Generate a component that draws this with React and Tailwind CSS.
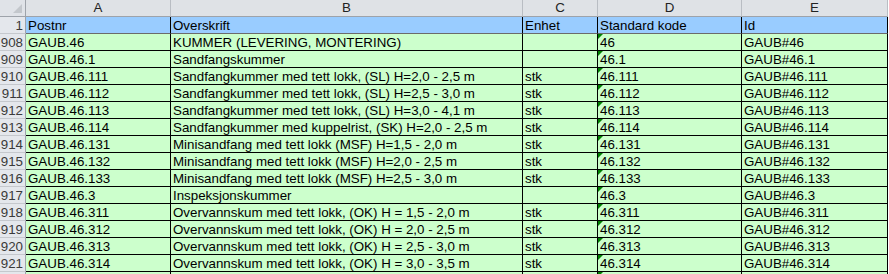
const cols = [
  { key: "A", w: "w-[145px]" },
  { key: "B", w: "w-[352px]" },
  { key: "C", w: "w-[75px]" },
  { key: "D", w: "w-[144px]" },
  { key: "E", w: "w-[146px]" },
];

const header = ["Postnr", "Overskrift", "Enhet", "Standard kode", "Id"];

const rows = [
  [908, "GAUB.46", "KUMMER (LEVERING, MONTERING)", "", "46"],
  [909, "GAUB.46.1", "Sandfangskummer", "", "46.1"],
  [910, "GAUB.46.111", "Sandfangkummer med tett lokk, (SL) H=2,0 - 2,5 m", "stk", "46.111"],
  [911, "GAUB.46.112", "Sandfangkummer med tett lokk, (SL) H=2,5 - 3,0 m", "stk", "46.112"],
  [912, "GAUB.46.113", "Sandfangkummer med tett lokk, (SL) H=3,0 - 4,1 m", "stk", "46.113"],
  [913, "GAUB.46.114", "Sandfangkummer med kuppelrist, (SK) H=2,0 - 2,5 m", "stk", "46.114"],
  [914, "GAUB.46.131", "Minisandfang med tett lokk (MSF) H=1,5 - 2,0 m", "stk", "46.131"],
  [915, "GAUB.46.132", "Minisandfang med tett lokk (MSF) H=2,0 - 2,5 m", "stk", "46.132"],
  [916, "GAUB.46.133", "Minisandfang med tett lokk (MSF) H=2,5 - 3,0 m", "stk", "46.133"],
  [917, "GAUB.46.3", "Inspeksjonskummer", "", "46.3"],
  [918, "GAUB.46.311", "Overvannskum med tett lokk, (OK) H = 1,5 - 2,0 m", "stk", "46.311"],
  [919, "GAUB.46.312", "Overvannskum med tett lokk, (OK) H = 2,0 - 2,5 m", "stk", "46.312"],
  [920, "GAUB.46.313", "Overvannskum med tett lokk, (OK) H = 2,5 - 3,0 m", "stk", "46.313"],
  [921, "GAUB.46.314", "Overvannskum med tett lokk, (OK) H = 3,0 - 3,5 m", "stk", "46.314"],
];

function RowHead({ children }) {
  return (
    <div className="w-[26px] h-full shrink-0 bg-[#e4e7ec] border-r border-b border-r-[#9ea3aa] border-b-[#c5c8cd] text-right pr-[2px] pt-[2px] leading-[14px] text-[#3a3a3a] overflow-hidden">
      {children}
    </div>
  );
}

function Cell({ w, children, flag }) {
  return (
    <div className={`${w} relative h-full shrink-0 bg-[#ccffcc] border-r border-b border-black pl-[2px] pt-[2px] leading-[14px] whitespace-nowrap overflow-hidden`}>
      {flag && (
        <span className="absolute left-0 top-0 w-0 h-0 border-t-[5px] border-r-[5px] border-t-[#008000] border-r-transparent" />
      )}
      {children}
    </div>
  );
}

export default function App() {
  return (
    <div className="w-[889px] h-[274px] overflow-hidden bg-white text-[13.33px] text-black" style={{ fontFamily: '"Liberation Sans", Arial, sans-serif' }}>
      {/* column letters */}
      <div className="flex h-[17px]">
        <div className="relative w-[26px] h-full shrink-0 bg-[#e0e3e8] border-r border-b border-[#9ea3aa]">
          <span className="absolute right-[3px] bottom-[3px] w-0 h-0 border-b-[9px] border-l-[9px] border-b-[#c3c7cc] border-l-transparent" />
        </div>
        {cols.map((c) => (
          <div key={c.key} className={`${c.w} h-full shrink-0 bg-[#dfe2e6] border-r border-b border-r-[#b9bdc3] border-b-[#9ea3aa] text-center pt-[1px] leading-[14px] text-[#222]`}>
            {c.key}
          </div>
        ))}
      </div>
      {/* header row */}
      <div className="flex h-[17px]">
        <RowHead>1</RowHead>
        {cols.map((c, i) => (
          <div key={c.key} className={`${c.w} h-full shrink-0 bg-[#99ccff] border-r border-r-black border-b border-b-[#6b6b6b] pl-[2px] pt-[2px] leading-[14px] whitespace-nowrap overflow-hidden`}>
            {header[i]}
          </div>
        ))}
      </div>
      {rows.map(([n, a, b, c, d]) => (
        <div key={n} className="flex h-[17px]">
          <RowHead>{n}</RowHead>
          <Cell w="w-[145px]">{a}</Cell>
          <Cell w="w-[352px]">{b}</Cell>
          <Cell w="w-[75px]">{c}</Cell>
          <Cell w="w-[144px]" flag>{d}</Cell>
          <Cell w="w-[146px]">GAUB#{d}</Cell>
        </div>
      ))}
      {/* next row, cut off by the window edge */}
      <div className="flex h-[17px]">
        <RowHead />
        <Cell w="w-[145px]" />
        <Cell w="w-[352px]" />
        <Cell w="w-[75px]" />
        <Cell w="w-[144px]" flag />
        <Cell w="w-[146px]" />
      </div>
    </div>
  );
}
